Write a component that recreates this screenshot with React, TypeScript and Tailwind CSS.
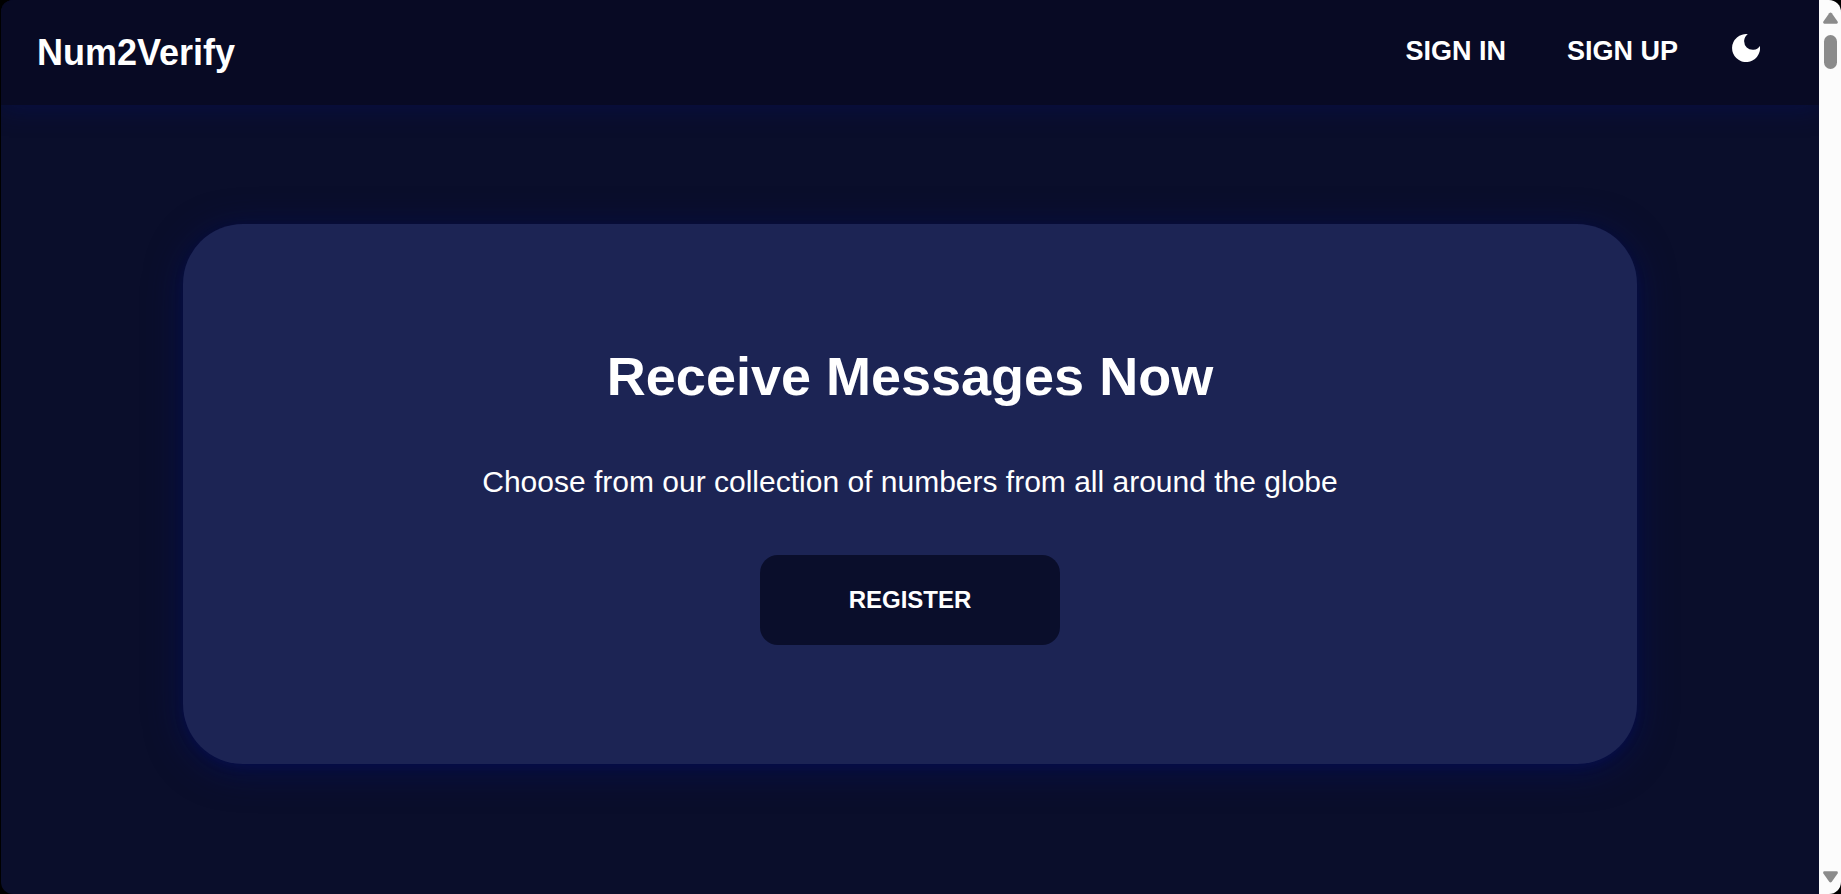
function MoonIcon() {
  return (
    <svg viewBox="0 0 28 28" className="size-7" fill="currentColor" aria-hidden="true">
      <path d="M15.8 0.2A14 14 0 1 0 27.9 12A8.6 8.6 0 1 1 15.8 0.2Z" />
    </svg>
  );
}

function Header() {
  return (
    <header className="flex h-[105px] items-center justify-between bg-[#080a24] pr-14 pl-9 shadow-[0_4px_24px_rgba(4,16,100,0.4)]">
      <a href="#" className="text-4xl font-bold">
        Num2Verify
      </a>
      <nav className="flex items-center pb-0.5 text-[27px] font-bold">
        <a href="#signin" className="mr-[61px]">
          SIGN IN
        </a>
        <a href="#signup" className="mr-[54px]">
          SIGN UP
        </a>
        <button type="button" aria-label="Toggle dark mode" className="mr-[3px] pb-2">
          <MoonIcon />
        </button>
      </nav>
    </header>
  );
}

function Hero() {
  return (
    <section className="mx-auto mt-[119px] flex w-4/5 flex-col items-center rounded-[60px] bg-[#1c2454] px-8 py-[119px] text-center shadow-[0_4px_8px_rgba(3,14,110,0.2),0_6px_36px_rgba(4,15,105,0.5)]">
      <h1 className="text-[54px] leading-[66px] font-bold">Receive Messages Now</h1>
      <p className="mt-[51px] text-[30px] leading-[44px]">
        Choose from our collection of numbers from all around the globe
      </p>
      <button
        type="button"
        className="mt-[51px] h-[90px] w-[300px] rounded-[18px] bg-[#0a0e2b] text-2xl font-bold"
      >
        REGISTER
      </button>
    </section>
  );
}

function ScrollRail() {
  return (
    <div className="flex w-[22px] shrink-0 flex-col items-center bg-[#fcfcfc] pt-3 pb-[11px]" aria-hidden="true">
      <svg viewBox="0 0 15 12" className="h-3 w-[15px]" fill="#8b8b8b">
        <path d="M6.2 1.3Q7.5 -0.3 8.8 1.3L14.6 9.6Q15.4 11.5 13.6 11.7H1.4Q-0.4 11.5 0.4 9.6Z" />
      </svg>
      <div className="mt-[11px] h-[34px] w-[13px] rounded-full bg-[#8b8b8b]" />
      <svg viewBox="0 0 15 12" className="mt-auto h-3 w-[15px] rotate-180" fill="#8b8b8b">
        <path d="M6.2 1.3Q7.5 -0.3 8.8 1.3L14.6 9.6Q15.4 11.5 13.6 11.7H1.4Q-0.4 11.5 0.4 9.6Z" />
      </svg>
    </div>
  );
}

export default function App() {
  return (
    <div className="min-h-screen bg-black pl-px font-['Liberation_Sans',Arial,sans-serif] text-white">
      <div className="flex min-h-screen overflow-hidden rounded-xl">
        <div className="flex-1 bg-[#0a0e2b]">
          <Header />
          <main>
            <Hero />
          </main>
        </div>
        <ScrollRail />
      </div>
    </div>
  );
}
